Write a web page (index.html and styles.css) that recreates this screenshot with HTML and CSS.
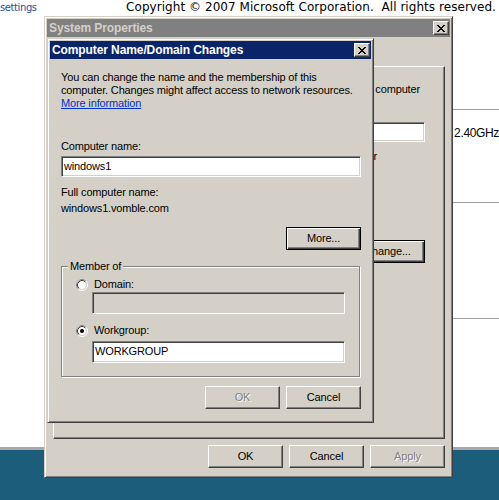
FILE: index.html
```html
<!DOCTYPE html>
<html lang="en">
<head>
<meta charset="utf-8">
<title>Computer Name/Domain Changes</title>
<link rel="stylesheet" href="styles.css">
</head>
<body>
<div class="topline">
  <span class="settings">settings</span>
  <span class="copyright">Copyright © 2007 Microsoft Corporation.&nbsp; All rights reserved.</span>
</div>

<div class="backwin">
  <div class="bw-row r1">CPU 2.40GHz</div>
  <div class="bw-row r2"></div>
  <div class="bw-row r3"></div>
</div>

<div class="desk"></div>

<div class="win sysprops">
  <div class="titlebar inactive">
    <span class="title">System Properties</span>
    <span class="xbtn"><svg width="8" height="7" viewBox="0 0 8 7" shape-rendering="crispEdges"><path d="M0 0h2v1H0zM6 0h2v1H6zM1 1h2v1H1zM5 1h2v1H5zM2 2h4v1H2zM3 3h2v1H3zM2 4h4v1H2zM1 5h2v1H1zM5 5h2v1H5zM0 6h2v1H0zM6 6h2v1H6z" fill="#000"/></svg></span>
  </div>
  <div class="sp-body">
    <div class="tabstrip"></div>
    <div class="tabpage">
      <div class="tp-desc">computer</div>
      <div class="tp-row">
        <span class="tb tp-box"></span>
      </div>
      <div class="tp-example">Computer" or</div>
      <div class="tp-rename">
        <span class="btn default">Change...</span>
      </div>
    </div>
    <div class="btnrow sp-btns">
      <span class="btn">OK</span>
      <span class="btn">Cancel</span>
      <span class="btn disabled">Apply</span>
    </div>
  </div>
</div>

<div class="win dialog">
  <div class="titlebar active">
    <span class="title">Computer Name/Domain Changes</span>
    <span class="xbtn"><svg width="8" height="7" viewBox="0 0 8 7" shape-rendering="crispEdges"><path d="M0 0h2v1H0zM6 0h2v1H6zM1 1h2v1H1zM5 1h2v1H5zM2 2h4v1H2zM3 3h2v1H3zM2 4h4v1H2zM1 5h2v1H1zM5 5h2v1H5zM0 6h2v1H0zM6 6h2v1H6z" fill="#000"/></svg></span>
  </div>
  <div class="dlg-body">
    <div class="intro">You can change the name and the membership of this<br>computer. Changes might affect access to network resources.<br><a class="link">More information</a></div>
    <div class="lbl-cn">Computer name:</div>
    <div class="tb cn-box">windows1</div>
    <div class="fullname">Full computer name:</div>
    <div class="fullname2">windows1.vomble.com</div>
    <div class="more-row"><span class="btn default">More...</span></div>
    <fieldset class="group">
      <legend>Member of</legend>
      <div class="radio-row first">
        <svg class="radio" width="12" height="12" viewBox="0 0 12 12"><circle cx="6" cy="6" r="5.5" fill="none" stroke="#fff"/><path d="M2.11 9.89A5.5 5.5 0 0 1 9.89 2.11" fill="none" stroke="#808080"/><circle cx="6" cy="6" r="4.5" fill="#fff" stroke="#d4d0c8"/><path d="M2.82 9.18A4.5 4.5 0 0 1 9.18 2.82" fill="none" stroke="#404040"/></svg>
        <span>Domain:</span>
      </div>
      <div class="tb grp-box dom-box disabled-box"></div>
      <div class="radio-row second">
        <svg class="radio" width="12" height="12" viewBox="0 0 12 12"><circle cx="6" cy="6" r="5.5" fill="none" stroke="#fff"/><path d="M2.11 9.89A5.5 5.5 0 0 1 9.89 2.11" fill="none" stroke="#808080"/><circle cx="6" cy="6" r="4.5" fill="#fff" stroke="#d4d0c8"/><path d="M2.82 9.18A4.5 4.5 0 0 1 9.18 2.82" fill="none" stroke="#404040"/><circle cx="6" cy="6" r="2" fill="#000"/></svg>
        <span>Workgroup:</span>
      </div>
      <div class="tb grp-box wg-box">WORKGROUP</div>
    </fieldset>
    <div class="btnrow dlg-btns">
      <span class="btn disabled">OK</span>
      <span class="btn">Cancel</span>
    </div>
  </div>
</div>
</body>
</html>
```
FILE: styles.css
```css
* { box-sizing: border-box; }
html, body { margin: 0; padding: 0; }
body {
  width: 499px;
  height: 500px;
  overflow: hidden;
  position: relative;
  background: #fff;
  font-family: "Liberation Sans", Arial, sans-serif;
  font-size: 11px;
  line-height: 13px;
  letter-spacing: -0.15px;
  color: #000;
}

/* desktop background bits */
.topline {
  display: flex;
  justify-content: space-between;
  align-items: baseline;
  padding-right: 3px;
  line-height: 14px;
  white-space: nowrap;
}
.settings {
  color: #1f4e9e;
  font-family: "DejaVu Sans", Verdana, sans-serif;
  font-size: 10px;
  letter-spacing: -0.4px;
}
.copyright {
  font-family: "DejaVu Sans", Verdana, sans-serif;
  font-size: 12px;
  letter-spacing: 0.05px;
}

.backwin {
  position: absolute;
  left: 300px;
  right: 0;
  top: 109px;
}
.bw-row { border-top: 1px solid #a0a0a0; }
.bw-row.r1 {
  height: 93px;
  padding-top: 16px;
  padding-right: 0;
  text-align: right;
  white-space: nowrap;
  font-size: 12px;
  line-height: 14px;
  letter-spacing: -0.35px;
}
.bw-row.r2 { height: 116px; }
.bw-row.r3 { height: 20px; }

.desk {
  position: absolute;
  left: 0;
  right: 0;
  top: 447px;
  bottom: 0;
  background: #1b5d7b;
  border-top: 3px solid #a8a8a8;
}

/* windows */
.win {
  position: absolute;
  display: flex;
  flex-direction: column;
  background: #d4d0c8;
  border: 1px solid;
  border-color: #d4d0c8 #404040 #404040 #d4d0c8;
  box-shadow: inset 1px 1px #fff, inset -1px -1px #808080;
  padding: 2px;
}
.sysprops { left: 44px; top: 16px; width: 409px; height: 462px; }
.dialog { left: 47px; top: 38px; width: 327px; height: 385px; }

.titlebar {
  flex: 0 0 18px;
  height: 18px;
  display: flex;
  align-items: center;
  justify-content: space-between;
  padding-left: 2px;
  padding-right: 1px;
  font-weight: bold;
  font-size: 12px;
  letter-spacing: -0.1px;
  white-space: nowrap;
}
.titlebar .title { padding-top: 1px; }
.titlebar.inactive { background: #808080; color: #d4d0c8; }
.titlebar.active { background: #0a246a; color: #fff; }
.xbtn {
  width: 16px;
  height: 14px;
  display: flex;
  align-items: center;
  justify-content: center;
  background: #d4d0c8;
  border: 1px solid;
  border-color: #fff #404040 #404040 #fff;
  box-shadow: inset -1px -1px #808080;
}
.xbtn svg { display: block; }

/* buttons */
.btnrow { display: flex; justify-content: flex-end; gap: 6px; }
.btn {
  width: 75px;
  height: 23px;
  flex: 0 0 75px;
  display: flex;
  align-items: center;
  justify-content: center;
  background: #d4d0c8;
  border: 1px solid;
  border-color: #fff #404040 #404040 #fff;
  box-shadow: inset -1px -1px #808080;
  white-space: nowrap;
}
.btn.default {
  border-color: #000;
  box-shadow: inset 1px 1px #fff, inset -1px -1px #404040, inset -2px -2px #808080;
}
.btn.disabled { color: #808080; text-shadow: 1px 1px 0 #fff; }

/* text boxes */
.tb {
  display: block;
  height: 21px;
  background: #fff;
  border: 1px solid;
  border-color: #808080 #fff #fff #808080;
  box-shadow: inset 1px 1px #404040, inset -1px -1px #d4d0c8;
  padding: 3px 2px;
  white-space: nowrap;
  overflow: hidden;
}
.disabled-box { background: #d4d0c8; }

/* System Properties body */
.sp-body {
  flex: 1;
  display: flex;
  flex-direction: column;
  padding: 0 5px 0 6px;
}
.tabstrip { flex: 0 0 29px; }
.tabpage {
  flex: 0 0 373px;
  height: 373px;
  border: 1px solid;
  border-color: #fff #404040 #404040 #fff;
  box-shadow: inset -1px -1px #808080;
  padding: 0 19px 0 12px;
  overflow: hidden;
}
.tp-desc { margin-top: 16px; text-align: right; padding-right: 5px; white-space: nowrap; }
.tp-row { display: flex; justify-content: flex-end; margin-top: 26px; }
.tp-box { flex: 0 0 265px; height: 20px; }
.tp-example { margin-top: 8px; text-align: right; padding-right: 48px; white-space: nowrap; }
.tp-rename { display: flex; justify-content: flex-end; margin-top: 77px; }
.sp-btns { margin-top: 6px; }

/* dialog body */
.dlg-body {
  flex: 1;
  display: flex;
  flex-direction: column;
  padding: 0 10px 0 11px;
}
.intro { margin-top: 12px; white-space: nowrap; }
.link { color: #0033cc; text-decoration: underline; }
.lbl-cn { margin-top: 30px; }
.cn-box { margin-top: 3px; }
.fullname { margin-top: 8px; line-height: 15px; }
.fullname2 { margin-top: 1px; line-height: 15px; }
.more-row { display: flex; justify-content: flex-end; margin-top: 11px; }

.group {
  margin: 10px 1px 0 0;
  padding: 0 0 13px 6px;
  border: 1px solid #808080;
  box-shadow: 1px 1px 0 #fff, inset 1px 1px 0 #fff;
  min-width: 0;
}
.group legend {
  padding: 0 2px;
  margin: 0;
  line-height: 12px;
  background: #d4d0c8;
}
.radio-row {
  display: flex;
  align-items: flex-start;
  gap: 6px;
  margin-left: 8px;
}
.radio-row.first { margin-top: 6px; }
.radio-row.second { margin-top: 10px; }
.radio { display: block; margin-top: 1px; flex: 0 0 12px; }
.grp-box { margin-left: 24px; width: 253px; height: 22px; }
.dom-box { margin-top: 1px; }
.wg-box { margin-top: 4px; }
.dlg-btns { margin-top: 9px; }
```
